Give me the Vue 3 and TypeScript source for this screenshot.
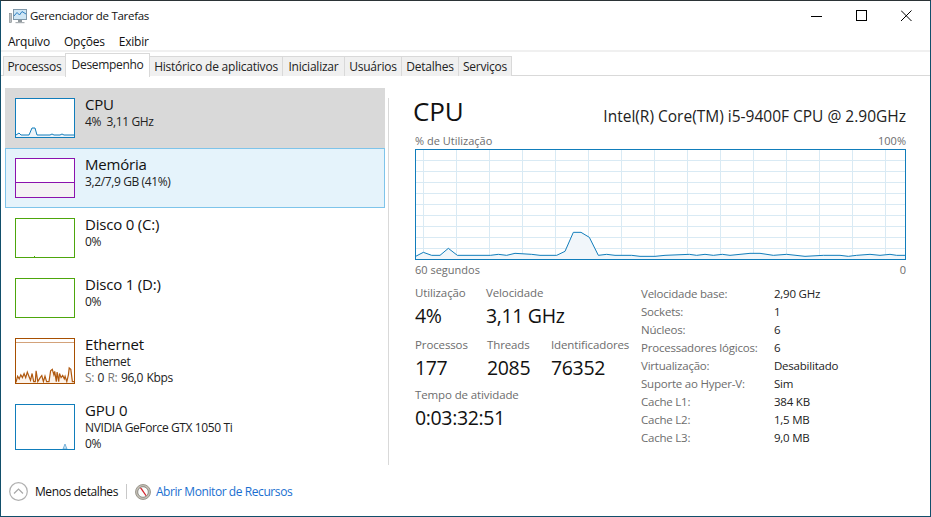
<script setup lang="ts">
type Pt = [number, number];

const menus = ['Arquivo', 'Opções', 'Exibir'];
const tabs = ['Processos', 'Desempenho', 'Histórico de aplicativos', 'Inicializar', 'Usuários', 'Detalhes', 'Serviços'];

const zoomA: Pt[] = [[32,382],[55,370],[80,379],[105,379],[130,358],[157,379],[256,379],[280,376],[305,379],[330,373],[380,376],[405,379],[455,379],[480,367],[505,310],[528,310],[553,325],[580,379],[605,376],[630,379],[680,379],[705,382],[750,382],[780,379]];
const zoomB: Pt[] = [[88,376],[110,379],[135,376],[160,379],[187,376],[210,379],[270,373],[300,373],[340,379],[380,376],[435,382],[490,379],[540,379],[565,382],[590,379],[630,376],[660,379],[690,376],[710,379],[735,379]];
const mainPts: Pt[] = [
  ...zoomA.map(([x, y]): Pt => [x / 3 + 405 - 415, y / 3 + 130 - 150]),
  ...zoomB.map(([x, y]): Pt => [x / 3 + 660 - 415, y / 3 + 130 - 150]),
];
const mainLine = mainPts.map((p) => p.join(',')).join(' ');
const mainFill = `0,110 ${mainLine} 490,110`;
const vLines = Array.from({ length: 15 }, (_, i) => 7.5 + i * 33.07);
const hLines = Array.from({ length: 9 }, (_, i) => 11.5 + i * 11);

const details = [
  ['Velocidade base:', '2,90 GHz'],
  ['Sockets:', '1'],
  ['Núcleos:', '6'],
  ['Processadores lógicos:', '6'],
  ['Virtualização:', 'Desabilitado'],
  ['Suporte ao Hyper-V:', 'Sim'],
  ['Cache L1:', '384 KB'],
  ['Cache L2:', '1,5 MB'],
  ['Cache L3:', '9,0 MB'],
];

const ethPts = '0,43 2,34 4,38 6,32 8,36 10,30 12,36 14,28 16,34 18,40 20,30 22,42 24,42 25,26 27,42 30,36 32,33 34,42 36,34 38,42 41,42 43,26 45,24 47,32 48,27 50,42 51,28 53,42 54,30 56,36 58,33 60,38 61,34 63,42 65,32 66,22 68,24 70,42 72,42';
const ethPoly = ethPts
  .split(' ')
  .map((p) => {
    const [x, y] = p.split(',').map(Number);
    return `${((x * 58) / 72 + 1).toFixed(1)},${(45 - (44 - y) * 0.68).toFixed(1)}`;
  })
  .join(' ');
</script>

<template>
  <div class="window">
    <header class="titlebar">
      <svg class="app-icon" width="18" height="16" viewBox="0 0 18 16">
        <rect x="0.5" y="5.5" width="2" height="9" fill="#b9bec2" stroke="#7d8488" stroke-width="0.6" />
        <rect x="4.5" y="1.5" width="13" height="10" fill="#cfe6f5" stroke="#7f98aa" />
        <polyline points="5,8 8,4.5 10.5,7 13,3.5 17,6" fill="none" stroke="#2c7fc2" stroke-width="1" />
        <rect x="9" y="12" width="4" height="2" fill="#8f979c" />
        <rect x="6.5" y="14" width="9" height="1.2" fill="#aab0b4" />
      </svg>
      <span class="title-text">Gerenciador de Tarefas</span>
      <div class="controls">
        <svg width="12" height="12" viewBox="0 0 12 12"><path d="M0 6.5H11" stroke="#000" fill="none" /></svg>
        <svg width="12" height="12" viewBox="0 0 12 12"><rect x="0.5" y="0.5" width="10" height="10" stroke="#000" fill="none" /></svg>
        <svg width="12" height="12" viewBox="0 0 12 12"><path d="M0 0.5L10.5 11M10.5 0.5L0 11" stroke="#000" fill="none" /></svg>
      </div>
    </header>

    <nav class="menubar">
      <span v-for="m in menus" :key="m">{{ m }}</span>
    </nav>

    <div class="tabstrip">
      <div v-for="(t, i) in tabs" :key="t" class="tab" :class="{ active: i === 1 }">{{ t }}</div>
    </div>

    <main class="body">
      <aside class="sidebar">
        <div class="item cpu">
          <svg class="thumb" width="60" height="40" viewBox="0 0 60 40">
            <polygon points="1,39 1,37 4,35 6,37 14,37 17,30 20,30 22,37 30,37 59,37 59,39" fill="#eef4f9" />
            <polyline points="1,37 4,35 6,37 14,37 17,30 20,30 22,37 35,37 37,36 39,37 45,37 47,36 49,37 59,37" fill="none" stroke="#117dbb" />
            <rect x="0.5" y="0.5" width="59" height="39" fill="none" stroke="#117dbb" />
          </svg>
          <div class="text">
            <div class="name">CPU</div>
            <div class="sub">4%&nbsp; 3,11 GHz</div>
          </div>
        </div>

        <div class="item mem">
          <svg class="thumb" width="60" height="40" viewBox="0 0 60 40">
            <rect x="0.5" y="24" width="59" height="15.5" fill="#f4f2f4" />
            <path d="M0 24.5H60" stroke="#8b12ae" />
            <rect x="0.5" y="0.5" width="59" height="39" fill="none" stroke="#8b12ae" />
          </svg>
          <div class="text">
            <div class="name">Memória</div>
            <div class="sub">3,2/7,9 GB (41%)</div>
          </div>
        </div>

        <div class="item">
          <svg class="thumb" width="60" height="40" viewBox="0 0 60 40">
            <path d="M19 38.5H20" stroke="#4da60c" />
            <rect x="0.5" y="0.5" width="59" height="39" fill="none" stroke="#4da60c" />
          </svg>
          <div class="text">
            <div class="name">Disco 0 (C:)</div>
            <div class="sub">0%</div>
          </div>
        </div>

        <div class="item">
          <svg class="thumb" width="60" height="40" viewBox="0 0 60 40">
            <rect x="0.5" y="0.5" width="59" height="39" fill="none" stroke="#4da60c" />
          </svg>
          <div class="text">
            <div class="name">Disco 1 (D:)</div>
            <div class="sub">0%</div>
          </div>
        </div>

        <div class="item tall">
          <svg class="thumb" width="60" height="46" viewBox="0 0 60 46">
            <polygon :points="`1,45 ${ethPoly} 59,45`" fill="#fcf3eb" />
            <polyline :points="ethPoly" fill="none" stroke="#b0590f" stroke-width="1.2" />
            <path d="M1 4.5H59" stroke="#d3a27a" />
            <rect x="0.5" y="0.5" width="59" height="45" fill="none" stroke="#a74f01" />
          </svg>
          <div class="text">
            <div class="name">Ethernet</div>
            <div class="sub">Ethernet</div>
            <div class="sub spaced"><span class="dim">S:</span> 0 <span class="dim">R:</span> 96,0 Kbps</div>
          </div>
        </div>

        <div class="item tall">
          <svg class="thumb" width="60" height="46" viewBox="0 0 60 46">
            <polygon points="48,45 50,40 52,45" fill="#cfe3f2" stroke="#4d9bd0" stroke-width="0.7" />
            <rect x="0.5" y="0.5" width="59" height="45" fill="none" stroke="#117dbb" />
          </svg>
          <div class="text">
            <div class="name">GPU 0</div>
            <div class="sub">NVIDIA GeForce GTX 1050 Ti</div>
            <div class="sub">0%</div>
          </div>
        </div>
      </aside>

      <div class="split"></div>

      <section class="pane">
        <div class="pane-head">
          <h1>CPU</h1>
          <div class="model">Intel(R) Core(TM) i5-9400F CPU @ 2.90GHz</div>
        </div>

        <div class="scale top"><span>% de Utilização</span><span>100%</span></div>
        <svg class="graph" width="491" height="111" viewBox="0 0 491 111">
          <line v-for="x in vLines" :key="'v' + x" :x1="Math.round(x) + 0.5" y1="0" :x2="Math.round(x) + 0.5" y2="111" stroke="#d9eaf4" />
          <line v-for="y in hLines" :key="'h' + y" x1="0" :y1="y" x2="491" :y2="y" stroke="#d9eaf4" />
          <polygon :points="mainFill" fill="#f1f6fa" />
          <polyline :points="mainLine" fill="none" stroke="#117dbb" stroke-width="1" />
          <rect x="0.5" y="0.5" width="490" height="110" fill="none" stroke="#117dbb" />
        </svg>
        <div class="scale bottom"><span>60 segundos</span><span>0</span></div>

        <div class="stats">
          <div class="live">
            <div class="row r1">
              <div class="stat"><div class="label">Utilização</div><div class="value">4%</div></div>
              <div class="stat"><div class="label">Velocidade</div><div class="value">3,11 GHz</div></div>
            </div>
            <div class="row r2">
              <div class="stat"><div class="label">Processos</div><div class="value">177</div></div>
              <div class="stat"><div class="label">Threads</div><div class="value">2085</div></div>
              <div class="stat"><div class="label">Identificadores</div><div class="value">76352</div></div>
            </div>
            <div class="row">
              <div class="stat"><div class="label">Tempo de atividade</div><div class="value">0:03:32:51</div></div>
            </div>
          </div>
          <dl class="details">
            <template v-for="d in details" :key="d[0]">
              <dt>{{ d[0] }}</dt>
              <dd>{{ d[1] }}</dd>
            </template>
          </dl>
        </div>
      </section>
    </main>

    <footer class="footer">
      <svg width="19" height="19" viewBox="0 0 19 19">
        <circle cx="9.5" cy="9.5" r="8.8" fill="#fff" stroke="#b0b0b0" stroke-width="1.2" />
        <path d="M5 11.5L9.5 7L14 11.5" fill="none" stroke="#a8a8a8" stroke-width="1.2" />
      </svg>
      <span class="less">Menos detalhes</span>
      <span class="sep"></span>
      <svg width="16" height="16" viewBox="0 0 16 16">
        <circle cx="8" cy="8" r="7.5" fill="#c4c0b6" stroke="#8a867c" stroke-width="0.8" />
        <circle cx="8" cy="8" r="5.3" fill="#fbfbfa" stroke="#6c6a64" stroke-width="0.7" />
        <polygon points="4.6,3.6 6.8,4.2 11.6,11.6 10.6,12" fill="#d4202a" />
      </svg>
      <a class="link">Abrir Monitor de Recursos</a>
    </footer>
  </div>
</template>

<style scoped>
.window {
  box-sizing: border-box;
  width: 931px;
  height: 517px;
  display: flex;
  flex-direction: column;
  background: #fff;
  border: 1px solid #124f6b;
  border-top-color: #2b3336;
  font-family: "Open Sans", "Liberation Sans", sans-serif;
  font-size: 12px;
  letter-spacing: -0.32px;
  color: #000;
  overflow: hidden;
}
.titlebar {
  height: 29px;
  box-sizing: border-box;
  padding: 0 0 0 8px;
  flex: none;
  display: flex;
  align-items: center;
}
.app-icon { margin-right: 3px; margin-top: 1px; }
.title-text {
  color: #111;
  font-size: 11.5px;
  letter-spacing: -0.3px;
}
.controls {
  margin-left: auto;
  display: flex;
  gap: 33px;
  margin-right: 17px;
  margin-top: 1px;
}
.menubar {
  height: 20px;
  box-sizing: border-box;
  padding: 2px 0 0 7px;
  flex: none;
  display: flex;
  align-items: center;
  gap: 14px;
  color: #111;
  letter-spacing: -0.22px;
}
.tabstrip {
  height: 26px;
  flex: none;
  box-sizing: border-box;
  display: grid;
  grid-template-columns: 63px 84px 133px 62px 57px 57px 53px;
  justify-content: start;
  padding: 3px 0 0 2px;
  border-top: 2px solid #f0f0f0;
  border-bottom: 1px solid #d9d9d9;
  position: relative;
  letter-spacing: -0.22px;
}
.tab {
  box-sizing: border-box;
  display: flex;
  align-items: center;
  justify-content: center;
  background: #f0f0f0;
  border: 1px solid #d9d9d9;
  border-left-width: 0;
  border-bottom-width: 0;
  height: 20px;
  margin-top: 1px;
  color: #222;
}
.tab:first-child { border-left-width: 1px; }
.tab.active {
  background: #fff;
  height: 24px;
  margin-top: -2px;
  margin-bottom: -1px;
  padding-bottom: 3px;
  position: relative;
  z-index: 1;
  border-left-width: 1px;
  margin-left: -1px;
  letter-spacing: -0.32px;
}
.body {
  flex: 1;
  min-height: 0;
  display: flex;
  padding-top: 12px;
}
.sidebar {
  width: 380px;
  margin-left: 4px;
  height: 377px;
  overflow: hidden;
  flex: none;
}
.item {
  box-sizing: border-box;
  height: 60px;
  display: flex;
  padding: 10px 0 0 10px;
  gap: 10px;
}
.item.tall { height: 66px; }
.item.cpu { background: #d9d9d9; }
.item.mem {
  background: #e5f3fb;
  outline: 1px solid #7ec4ea;
  outline-offset: -1px;
}
.thumb { flex: none; display: block; background: #fff; }
.text { margin-top: -2px; }
.name {
  font-size: 15px;
  line-height: 17px;
  letter-spacing: -0.2px;
  color: #111;
  margin-bottom: 1px;
}
.sub {
  font-size: 12px;
  line-height: 15.5px;
  letter-spacing: -0.38px;
  color: #222;
}
.sub.spaced { word-spacing: 0.8px; }
.dim { color: #777; }
.split {
  width: 1px;
  height: 367px;
  margin: 10px 0 0 3px;
  background: #d9d9d9;
  flex: none;
}
.pane {
  flex: 1;
  padding: 0 24px 0 25px;
  min-width: 0;
}
.pane-head {
  display: flex;
  justify-content: space-between;
  align-items: flex-end;
  height: 40px;
  margin-bottom: 5px;
}
h1 {
  font-size: 26px;
  font-weight: 400;
  line-height: 36px;
  margin: 0 0 -1px -1px;
  letter-spacing: -0.1px;
  color: #111;
}
.model {
  font-size: 15.5px;
  line-height: 20px;
  padding-bottom: 2px;
  letter-spacing: 0;
  color: #222;
}
.scale {
  display: flex;
  justify-content: space-between;
  color: #6d6d6d;
  font-size: 11px;
  line-height: 15px;
  margin-left: 1px;
  letter-spacing: 0;
}
.scale.top { height: 16px; }
.graph { display: block; margin-left: 1px; }
.scale.bottom { margin-top: 2px; height: 15px; }
.stats {
  display: flex;
  margin-top: 8px;
  margin-left: 1px;
}
.live { width: 226px; flex: none; }
.row { display: flex; height: 51px; }
.stat { flex: none; }
.r1 .stat:first-child { width: 71px; }
.r2 { padding-top: 1px; height: 50px; }
.r2 .stat:nth-child(1) { width: 72px; }
.r2 .stat:nth-child(2) { width: 64px; }
.label {
  color: #6d6d6d;
  font-size: 11.5px;
  line-height: 16px;
  letter-spacing: -0.12px;
}
.value {
  font-size: 19.5px;
  line-height: 28px;
  letter-spacing: -0.35px;
  color: #111;
  margin-top: 1px;
}
.details {
  margin: -1px 0 0 0;
  display: grid;
  grid-template-columns: 133px auto;
  grid-auto-rows: 18px;
  align-items: center;
  font-size: 11.5px;
  letter-spacing: -0.22px;
  justify-content: start;
  align-self: flex-start;
}
dt { color: #6d6d6d; }
dd { margin: 0; color: #222; }
.footer {
  height: 50px;
  box-sizing: border-box;
  padding: 1px 0 0 8px;
  flex: none;
  display: flex;
  align-items: center;
  margin-top: auto;
  letter-spacing: -0.42px;
}
.less { margin-left: 7px; color: #111; }
.sep {
  width: 1px;
  height: 15px;
  background: #c8c8c8;
  margin: 0 8px;
}
.link {
  margin-left: 5px;
  color: #1a6fd0;
}
</style>

<style>
html, body { margin: 0; background: #fff; }
</style>
